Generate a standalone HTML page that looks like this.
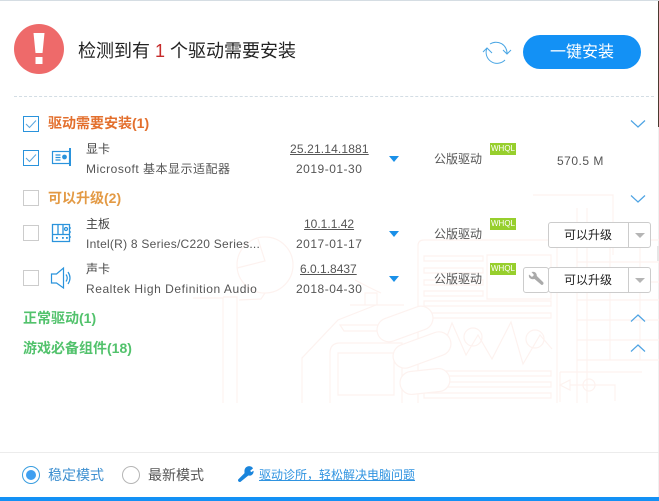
<!DOCTYPE html>
<html><head><meta charset="utf-8">
<style>
html,body{margin:0;padding:0;background:#fff}
body{width:659px;height:501px;position:relative;overflow:hidden;font-family:"Liberation Sans","Noto Sans CJK SC",sans-serif;color:#555}
.t{position:absolute;white-space:nowrap;line-height:16px;font-size:12px}
.cb{position:absolute;left:23px;width:14px;height:14px;border:1px solid #ccc;background:#fff}
.cb.on{border-color:#2a93dc}
.u{text-decoration:underline}
.d{letter-spacing:.5px}
.h{font-size:14px;font-weight:bold;line-height:20px}
.n{color:#444}
svg{position:absolute}
.w{position:absolute;left:490px;width:26px;height:12px;background:#97cf2d;color:#fff;font-size:8px;line-height:12px;text-align:center;overflow:hidden}
.sel{position:absolute;left:548px;width:101px;height:24px;border:1px solid #ccc;border-radius:3px;background:#fff;color:#222;font-size:12px;line-height:24px}
.sel span{position:absolute;left:15px;top:0}
.sel i{position:absolute;left:79px;top:0;width:1px;height:24px;background:#ccc}
.sel b{position:absolute;left:86px;top:10px;width:0;height:0;border-left:5px solid transparent;border-right:5px solid transparent;border-top:5px solid #b5b5b5}
.tri{position:absolute;left:389px;width:0;height:0;border-left:5.5px solid transparent;border-right:5.5px solid transparent;border-top:6px solid #1a90e8}
</style></head><body>
<div style="position:absolute;left:0;top:0;width:659px;height:1px;background:#d5dde3"></div>
<div style="position:absolute;left:658px;top:1px;width:1px;height:126px;background:#4a3a30"></div>
<div style="position:absolute;left:658px;top:127px;width:1px;height:374px;background:#f0f0f0"></div>
<div style="position:absolute;left:657px;top:246px;width:2px;height:15px;background:#e6e6e6"></div>

<!-- background illustration -->
<svg style="left:190px;top:190px" width="469" height="215" viewBox="190 190 469 215" fill="none" stroke="#fdf2ef" stroke-width="1.200">
<circle cx="265" cy="265" r="28"/><path d="M237 268l28-7-7-22M193 298h30v105M223 297h14v106M265 293l-4 6-22 1"/>
<path d="M302 403v-45l36-38 38-15"/>
<path d="M418 403V246q0-6 6-6h127q6 0 6 6v157"/>
<path d="M424 256h59v5h-59zM424 268h59v5h-59zM424 280h59v5h-59zM424 291h59v5h-59zM424 301h127v5H424zM424 313h127v5H424zM424 371h127v5H424zM424 382h127v5H424zM424 393h127v5H424zM487 255h64v44h-64z"/>
<path d="M440 355l12-32 14 32 12-20 14 24 19-37 12 42 17-29 12 14"/>
<circle cx="473" cy="337" r="9"/><circle cx="535" cy="339" r="9"/>
<path d="M330 403v-50q0-10 10-10h62v60M338 395v-42h56v42z"/>
<path d="M340 325h60l-4 6h-52zM350 305h54M365 293h12v12h-12zM355 280q15 8 26 13"/>
<path d="M577 208v195M587 208v195M577 240h82M577 262h82M577 282h82M577 300h82M577 320h82M577 340h82M577 360h82M610 240v120M640 240v120"/>
<path d="M533 195h80v60M560 372h82M560 372v30"/>
<circle cx="589" cy="385" r="6"/><path d="M560 385l10-5v10zM570 385h45v16"/>
</svg>
<svg style="left:370px;top:300px" width="90" height="100" viewBox="370 300 90 100" fill="#fff" stroke="#fdf2ef" stroke-width="1.200">
<rect x="376" y="312" width="58" height="24" rx="12" transform="rotate(-20 405 324)"/>
<rect x="392" y="338" width="60" height="24" rx="12" transform="rotate(-20 422 350)"/>
<rect x="400" y="370" width="50" height="23" rx="11.500" transform="rotate(-6 425 382)"/>
</svg>

<!-- header -->
<svg style="left:14px;top:24px" width="50" height="50" viewBox="0 0 50 50"><circle cx="25" cy="25" r="25" fill="#ee6a6a"/><path d="M19.500 9h11l-2 20h-7z" fill="#fff"/><rect x="21.500" y="33" width="7" height="7" fill="#fff"/></svg>
<div class="t" style="left:78px;top:39px;font-size:18px;line-height:24px;color:#222">检测到有 <span style="color:#c62a2a">1</span> 个驱动需要安装</div>
<svg style="left:482px;top:39px" width="30" height="26" viewBox="0 0 30 26" fill="none" stroke="#4aa6e4" stroke-width="1"><path d="M5 9A11 11 0 0 0 23 21"/><path d="M8 5A11 11 0 0 1 25 15"/><path d="M21 11l4 4 4-4"/><path d="M1 13l4-4 5 5"/></svg>
<div style="position:absolute;left:523px;top:35px;width:118px;height:34px;border-radius:17px;background:#1391f5;color:#fff;font-size:16px;line-height:35px;text-align:center">一键安装</div>
<div style="position:absolute;left:14px;top:96px;width:640px;border-top:1px dashed #d3dde4"></div>

<!-- section 1 -->
<div class="cb on" style="top:116px"></div>
<svg style="left:24px;top:117px" width="14" height="14" fill="none" stroke="#5aa6de" stroke-width="1"><path d="M2 7l3.500 3.500L12 3.500"/></svg>
<div class="t h" style="left:48px;top:113px;color:#e36f2d">驱动需要安装(1)</div>
<svg style="left:630px;top:119px" width="16" height="10" fill="none" stroke="#4da3e3" stroke-width="1.200"><path d="M1 1.500l7 6.500 7-6.500"/></svg>

<div class="cb on" style="top:150px"></div>
<svg style="left:24px;top:151px" width="14" height="14" fill="none" stroke="#5aa6de" stroke-width="1"><path d="M2 7l3.500 3.500L12 3.500"/></svg>
<svg style="left:50px;top:147px" width="22" height="20" fill="none" stroke="#2a93dc" stroke-width="1.200"><rect x="2.500" y="4.500" width="17" height="12"/><path d="M20 1v18" stroke-width="2"/><path d="M5.500 8h5M5.500 10.500h5M5.500 13h5"/><circle cx="14.500" cy="10" r="1.800" fill="#2a93dc"/></svg>
<div class="t n" style="left:86px;top:141px">显卡</div>
<div class="t d" style="left:86px;top:161px">Microsoft 基本显示适配器</div>
<div class="t u" style="left:290px;top:141px;letter-spacing:.15px">25.21.14.1881</div>
<div class="t d" style="left:296px;top:161px">2019-01-30</div>
<div class="tri" style="top:156px"></div>
<div class="t" style="left:434px;top:151px">公版驱动</div>
<div class="w" style="top:143px">WHQL</div>
<div class="t d" style="left:557px;top:153px">570.5 M</div>

<!-- section 2 -->
<div class="cb" style="top:190px"></div>
<div class="t h" style="left:48px;top:188px;color:#e39a45">可以升级(2)</div>
<svg style="left:630px;top:194px" width="16" height="10" fill="none" stroke="#4da3e3" stroke-width="1.200"><path d="M1 1.500l7 6.500 7-6.500"/></svg>

<div class="cb" style="top:225px"></div>
<svg style="left:50px;top:222px" width="24" height="22" fill="none" stroke="#2a93dc" stroke-width="1.300"><path d="M2.500 2.500h17v17h-17zM2.500 12.500h17M8 2.500v10M13 2.500v10"/><circle cx="16" cy="7" r="1.500"/><path d="M19.500 6h1.500M19.500 10h1.500M19.500 15h1.500"/><rect x="6" y="15" width="1.800" height="1.800" fill="#2a93dc" stroke="none"/><rect x="12" y="15" width="1.800" height="1.800" fill="#2a93dc" stroke="none"/><rect x="16" y="15" width="1.800" height="1.800" fill="#2a93dc" stroke="none"/></svg>
<div class="t n" style="left:86px;top:216px">主板</div>
<div class="t" style="left:86px;top:236px;letter-spacing:.25px">Intel(R) 8 Series/C220 Series...</div>
<div class="t u" style="left:304px;top:216px">10.1.1.42</div>
<div class="t d" style="left:296px;top:236px">2017-01-17</div>
<div class="tri" style="top:231px"></div>
<div class="t" style="left:434px;top:226px">公版驱动</div>
<div class="w" style="top:218px">WHQL</div>
<div class="sel" style="top:222px"><span>可以升级</span><i></i><b></b></div>

<div class="cb" style="top:270px"></div>
<svg style="left:50px;top:266px" width="24" height="24" fill="none" stroke="#2a93dc" stroke-width="1.200"><path d="M1.500 8h5l7-6v20l-7-5h-5z"/><path d="M16 8.500q2.500 3.500 0 7M18 6q4 6 0 12"/></svg>
<div class="t n" style="left:86px;top:261px">声卡</div>
<div class="t" style="left:86px;top:281px;letter-spacing:.55px">Realtek High Definition Audio</div>
<div class="t u" style="left:300px;top:261px">6.0.1.8437</div>
<div class="t d" style="left:296px;top:281px">2018-04-30</div>
<div class="tri" style="top:276px"></div>
<div class="t" style="left:434px;top:271px">公版驱动</div>
<div class="w" style="top:263px">WHQL</div>
<div style="position:absolute;left:523px;top:267px;width:24px;height:24px;border:1px solid #ccc;border-radius:3px;background:#fff"></div>
<svg style="left:527px;top:271px" width="18" height="18" viewBox="0 0 18 18"><path d="M2 3.500l3 2.500 2-2-2.500-3C7 0 10 1.500 9.800 5L16 11c1.500 1.500-.5 4-2 2.500L7.500 8C4 9 1 6.500 2 3.500z" fill="#aaa"/></svg>
<div class="sel" style="top:267px"><span>可以升级</span><i></i><b></b></div>

<!-- section 3, 4 -->
<div class="t h" style="left:23px;top:308px;color:#52c26c">正常驱动(1)</div>
<svg style="left:630px;top:313px" width="16" height="10" fill="none" stroke="#4da3e3" stroke-width="1.200"><path d="M1 8.500l7-6.500 7 6.500"/></svg>
<div class="t h" style="left:23px;top:338px;color:#52c26c">游戏必备组件(18)</div>
<svg style="left:630px;top:343px" width="16" height="10" fill="none" stroke="#4da3e3" stroke-width="1.200"><path d="M1 8.500l7-6.500 7 6.500"/></svg>

<!-- footer -->
<div style="position:absolute;left:0;top:452px;width:659px;height:1px;background:#ececec"></div>
<div style="position:absolute;left:22px;top:466px;width:16px;height:16px;border:1px solid #3a9ee0;border-radius:50%;background:#fff"></div>
<div style="position:absolute;left:26px;top:470px;width:10px;height:10px;border-radius:50%;background:#3f9ff0"></div>
<div class="t" style="left:48px;top:467px;font-size:14px;color:#3d8fd0">稳定模式</div>
<div style="position:absolute;left:122px;top:466px;width:16px;height:16px;border:1px solid #b5b5b5;border-radius:50%;background:#fff"></div>
<div class="t" style="left:148px;top:467px;font-size:14px;color:#555">最新模式</div>
<svg style="left:237px;top:466px" width="17" height="17" viewBox="0 0 18 18"><path d="M11 .5c3-1 5 .5 6 2l-3 2.500 1 1.500 2.500-1.500c.5 3-2 6-5.500 5L4 16.500c-1.500 1.500-4-1-2.500-2.500L8 7.500C7.500 4 8.500 1.500 11 .5z" fill="#1a85dc"/></svg>
<div class="t u" style="left:259px;top:467px;color:#2f93e0">驱动诊所，轻松解决电脑问题</div>
<div style="position:absolute;left:0;top:497px;width:659px;height:4px;background:#1391f5"></div>
</body></html>
